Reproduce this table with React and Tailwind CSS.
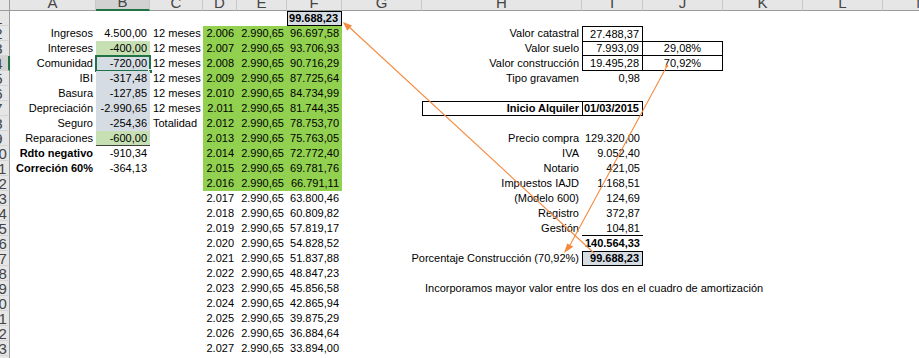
import React from 'react';
import { clsx } from 'clsx';

const COLS = ['A', 'B', 'C', 'D', 'E', 'F', 'G', 'H', 'I', 'J', 'K', 'L', 'M'];

const GREEN = 'bg-[#92d050]';
const LIGHT = 'bg-[#c6e0b4]';
const SLATE = 'bg-[#d6dce4]';

const years = [
  ['2.006', '96.697,58'], ['2.007', '93.706,93'], ['2.008', '90.716,29'], ['2.009', '87.725,64'],
  ['2.010', '84.734,99'], ['2.011', '81.744,35'], ['2.012', '78.753,70'], ['2.013', '75.763,05'],
  ['2.014', '72.772,40'], ['2.015', '69.781,76'], ['2.016', '66.791,11'], ['2.017', '63.800,46'],
  ['2.018', '60.809,82'], ['2.019', '57.819,17'], ['2.020', '54.828,52'], ['2.021', '51.837,88'],
  ['2.022', '48.847,23'], ['2.023', '45.856,58'], ['2.024', '42.865,94'], ['2.025', '39.875,29'],
  ['2.026', '36.884,64'], ['2.027', '33.894,00'], ['2.028', '30.903,35'],
];

// left block, col A / B / C
const left = {
  2: [{ v: 'Ingresos' }, { v: '4.500,00' }, { v: '12 meses', a: 'l' }],
  3: [{ v: 'Intereses' }, { v: '-400,00', cls: LIGHT }, { v: '12 meses', a: 'l' }],
  4: [{ v: 'Comunidad' }, { v: '-720,00', cls: SLATE, sel: true }, { v: '12 meses', a: 'l' }],
  5: [{ v: 'IBI' }, { v: '-317,48', cls: SLATE }, { v: '12 meses', a: 'l' }],
  6: [{ v: 'Basura' }, { v: '-127,85', cls: SLATE }, { v: '12 meses', a: 'l' }],
  7: [{ v: 'Depreciación' }, { v: '-2.990,65', cls: SLATE }, { v: '12 meses', a: 'l' }],
  8: [{ v: 'Seguro' }, { v: '-254,36', cls: SLATE }, { v: 'Totalidad', a: 'l' }],
  9: [{ v: 'Reparaciones' }, { v: '-600,00', cls: clsx(LIGHT, 'border-b border-[#3f3f3f]') }, null],
  10: [{ v: 'Rdto negativo', b: true }, { v: '-910,34' }, null],
  11: [{ v: 'Correción 60%', b: true }, { v: '-364,13' }, null],
};

// right block, col H / I / J
const right = {
  2: [{ v: 'Valor catastral' }, { v: '27.488,37', cls: 'border-l border-t border-r border-black' }, null],
  3: [{ v: 'Valor suelo' }, { v: '7.993,09', cls: 'border border-black' }, { v: '29,08%', a: 'c', cls: 'border-t border-r border-b border-black' }],
  4: [{ v: 'Valor construcción' }, { v: '19.495,28', cls: 'border-l border-r border-b border-black' }, { v: '70,92%', a: 'c', cls: 'border-r border-b border-black' }],
  5: [{ v: 'Tipo gravamen' }, { v: '0,98' }, null],
  7: [{ v: 'Inicio Alquiler', b: true, cls: 'border-l border-t border-b border-black' }, { v: '01/03/2015', b: true, cls: 'border border-black' }, null],
  9: [{ v: 'Precio compra' }, { v: '129.320,00' }, null],
  10: [{ v: 'IVA' }, { v: '9.052,40' }, null],
  11: [{ v: 'Notario' }, { v: '421,05' }, null],
  12: [{ v: 'Impuestos IAJD' }, { v: '1.168,51' }, null],
  13: [{ v: '(Modelo 600)' }, { v: '124,69' }, null],
  14: [{ v: 'Registro' }, { v: '372,87' }, null],
  15: [{ v: 'Gestión' }, { v: '104,81', cls: 'border-b border-black' }, null],
  16: [null, { v: '140.564,33', b: true }, null],
  17: [{ v: 'Porcentaje Construcción (70,92%)' }, { v: '99.688,23', b: true, cls: clsx(SLATE, 'border border-black') }, null],
  19: [{ v: 'Incorporamos mayor valor entre los dos en el cuadro de amortización', a: 'l' }, null, null],
};

function buildRow(r) {
  const row = {};
  if (r === 1) {
    row.F = { v: '99.688,23', b: true, cls: clsx(SLATE, 'border border-black') };
  }
  const l = left[r];
  if (l) {
    ['A', 'B', 'C'].forEach((k, i) => { if (l[i]) row[k] = l[i]; });
  }
  const y = years[r - 2];
  if (y) {
    const fill = r <= 12 ? GREEN : '';
    row.D = { v: y[0], cls: fill };
    row.E = { v: '2.990,65', cls: fill };
    row.F = { v: y[1], cls: fill };
  }
  const rr = right[r];
  if (rr) {
    ['H', 'I', 'J'].forEach((k, i) => { if (rr[i]) row[k] = rr[i]; });
  }
  return row;
}

const Cell = ({ c }) => {
  if (!c) return <div />;
  const align = c.a === 'l' ? 'justify-start pl-[3px]' : c.a === 'c' ? 'justify-center' : 'justify-end pr-[3px]';
  return (
    <div className={clsx('relative flex items-center whitespace-nowrap', align, c.b && 'font-bold', c.cls)}>
      <span className="shrink-0 leading-none">{c.v}</span>
      {c.sel && (
        <>
          <div className="absolute -top-[1px] -left-[1px] -right-[1px] -bottom-[1px] border-2 border-[#217346]" />
          <div className="absolute -right-[3px] -bottom-[3px] w-[5px] h-[5px] bg-[#217346] border border-white" />
        </>
      )}
    </div>
  );
};

// row numbers are centred in a wider column that is scrolled partly out of view
const RowHead = ({ n }) => (
  <div
    className={clsx(
      'overflow-hidden border-b border-[#d4d4d4] text-[15px] text-[#444]',
      n === 4 ? 'bg-[#d2d2d2] border-r-2 border-r-[#217346]' : 'bg-[#e6e6e6] border-r border-r-[#9b9b9b]'
    )}
  >
    <div className="w-[23px] -ml-[13px] h-full flex items-center justify-center leading-none">{n}</div>
  </div>
);

const Arrows = () => (
  <svg className="absolute inset-0 pointer-events-none" width="919" height="358">
    <g stroke="#f58a3f" strokeWidth="1.1" fill="#f58a3f">
      <line x1="594" y1="253" x2="348" y2="26" />
      <polygon points="343,22 352,25.5 347.2,30.7" stroke="none" />
      <line x1="667" y1="66" x2="569" y2="247" />
      <polygon points="564,253 567.2,243.4 573.4,246.8" stroke="none" />
      <circle cx="667" cy="66" r="1.3" stroke="none" />
    </g>
  </svg>
);

export default function App() {
  const rows = Array.from({ length: 24 }, (_, i) => i + 1);
  return (
    <div
      className="relative w-[919px] h-[358px] overflow-hidden bg-white text-[11px] text-black"
      style={{ fontFamily: '"Liberation Sans", Arial, sans-serif' }}
    >
      <div className="grid grid-cols-[10px_86px_54px_53px_34px_50px_55px_80px_160px_61px_80px_80px_80px_80px] grid-rows-[11px] auto-rows-[15px]">
        {/* column headers */}
        <div className="bg-[#e6e6e6] border-r border-b border-[#9b9b9b]" />
        {COLS.map((c) => (
          <div
            key={c}
            className={clsx(
              'flex items-end justify-center overflow-hidden border-r border-r-[#c8c8c8] text-[15px] text-[#444]',
              c === 'B' ? 'bg-[#d2d2d2] border-b-2 border-b-[#217346]' : 'bg-[#e6e6e6] border-b border-b-[#9b9b9b]'
            )}
          >
            <span className="leading-none">{c}</span>
          </div>
        ))}

        {rows.map((r) => {
          const data = buildRow(r);
          return (
            <React.Fragment key={r}>
              <RowHead n={r} />
              {COLS.map((c) => (
                <Cell key={c} c={data[c]} />
              ))}
            </React.Fragment>
          );
        })}
      </div>
      <Arrows />
    </div>
  );
}
